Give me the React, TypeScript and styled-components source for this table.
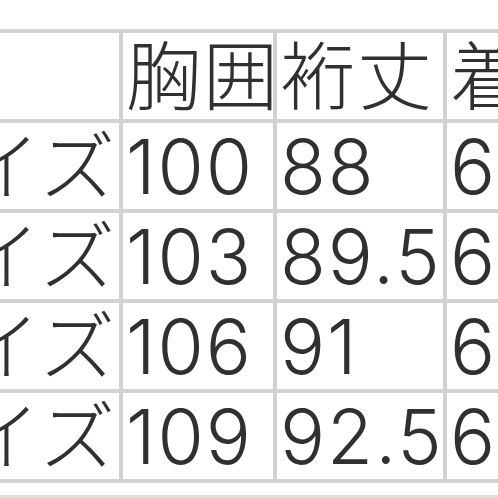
import { Fragment } from "react";
import styled, { createGlobalStyle } from "styled-components";

const GlobalStyle = createGlobalStyle`
  html, body {
    margin: 0;
    padding: 0;
    background: #ffffff;
  }
  body {
    font-family: "Inter", "Noto Sans CJK JP", sans-serif;
    color: #333333;
  }
`;

const rows = [
  { size: "Sサイズ", chest: "100", yuki: "88", length: "66" },
  { size: "Mサイズ", chest: "103", yuki: "89.5", length: "66" },
  { size: "Lサイズ", chest: "106", yuki: "91", length: "64" },
  { size: "XLサイズ", chest: "109", yuki: "92.5", length: "66" },
];

const Page = styled.div`
  width: 498px;
  height: 498px;
  overflow: hidden;
  padding-top: 29px;
  box-sizing: border-box;
`;

const Table = styled.div`
  display: grid;
  grid-template-columns: 119px 150px 166px 220px;
  grid-auto-rows: 86px;
  gap: 4px;
  padding: 4px 0;
  background: #d2d2d2;
  width: max-content;
`;

const Cell = styled.div<{ $first?: boolean }>`
  background: #ffffff;
  display: flex;
  align-items: center;
  justify-content: ${(p) => (p.$first ? "flex-end" : "flex-start")};
  padding: ${(p) => (p.$first ? "0 2px 0 0" : "0 0 0 3px")};
  overflow: hidden;
  white-space: nowrap;
  font-size: 75px;
  font-weight: 300;
  letter-spacing: 2px;
  line-height: 1;
  color: #303030;
`;

const NextRow = styled.div`
  margin-top: 12px;
  height: 3px;
  background: #dedede;
`;

export default function App() {
  return (
    <>
      <GlobalStyle />
      <Page>
        <Table>
          <Cell $first />
          <Cell>胸囲</Cell>
          <Cell>裄丈</Cell>
          <Cell>着丈</Cell>
          {rows.map((r) => (
            <Fragment key={r.size}>
              <Cell $first>{r.size}</Cell>
              <Cell>{r.chest}</Cell>
              <Cell>{r.yuki}</Cell>
              <Cell>{r.length}</Cell>
            </Fragment>
          ))}
        </Table>
        <NextRow />
      </Page>
    </>
  );
}
